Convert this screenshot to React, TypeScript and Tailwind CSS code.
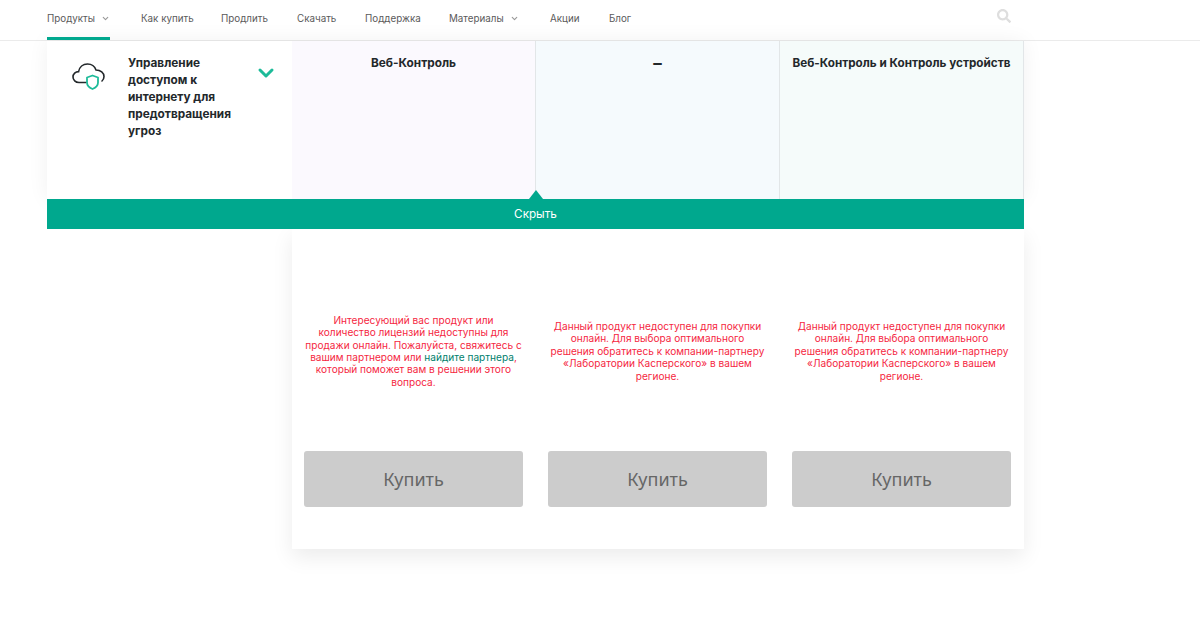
import { ChevronDown } from "lucide-react";
import { FaSearch } from "react-icons/fa";

const navItems = [
  { label: "Продукты", active: true, arrow: true, cls: "w-[94px]" },
  { label: "Как купить", cls: "w-[80px]" },
  { label: "Продлить", cls: "w-[76px]" },
  { label: "Скачать", cls: "w-[68px]" },
  { label: "Поддержка", cls: "w-[84px]" },
  { label: "Материалы", arrow: true, cls: "w-[101px]" },
  { label: "Акции", cls: "w-[59px]" },
  { label: "Блог", cls: "w-[388px]" },
];

function CloudShield() {
  return (
    <svg width="34" height="32" viewBox="0 0 34 32" fill="none">
      <path
        d="M15 24.5H8C4.5 24.5 2 22 2 19C2 16 4.5 13.6 7.6 13.6C8.4 9 12 6 16.5 6C20.6 6 23.8 8.6 25 12C29.6 12 33 15 33 18.6C33 20.4 32.2 22 31 23"
        stroke="#23282b"
        strokeWidth="1.6"
        strokeLinecap="round"
      />
      <path
        d="M21.5 17.5L27 19.5V24.5C27 27.5 24.6 29.8 21.5 31C18.4 29.8 16 27.5 16 24.5V19.5L21.5 17.5Z"
        fill="#fff"
        stroke="#1dbb99"
        strokeWidth="1.8"
        strokeLinejoin="round"
      />
    </svg>
  );
}

function BuyColumn({ children }: { children: React.ReactNode }) {
  return (
    <div className="flex-1 pl-3 pr-[13px]">
      <div className="flex h-[180px] items-center justify-center whitespace-nowrap text-center text-[10.1px] leading-[12.4px] text-[#f5273f]">
        {children}
      </div>
      <div className="mt-[10px] flex h-14 items-center justify-center rounded-[3px] bg-[#cccccc] font-['Noto_Sans',sans-serif] text-lg text-[#666666]">
        Купить
      </div>
    </div>
  );
}

const unavailable = (
  <p>
    Данный продукт недоступен для покупки
    <br />
    онлайн. Для выбора оптимального
    <br />
    решения обратитесь к компании-партнеру
    <br />
    «Лаборатории Касперского» в вашем
    <br />
    регионе.
  </p>
);

export default function App() {
  return (
    <div className="h-[637px] overflow-hidden bg-white font-['Inter',sans-serif]">
      <header className="h-[41px] border-b border-[#ebebeb] pl-[47px]">
        <nav className="flex h-10 items-start text-[9.8px] text-[#5a5a5a]">
          {navItems.map((item) => (
            <div key={item.label} className={`relative flex h-10 items-start pt-3 leading-[13px] ${item.cls}`}>
              {item.label}
              {item.arrow && <ChevronDown className="ml-[6px] mt-[2px] size-[9px] text-[#999999]" strokeWidth={3} />}
              {item.active && <div className="absolute bottom-0 left-0 h-[3px] w-[63px] bg-[#00a88e]" />}
            </div>
          ))}
          <FaSearch className="mt-[9px] size-[14px] text-[#dedede]" />
        </nav>
      </header>

      <main className="ml-[47px] w-[977px]">
        <section className="flex h-[158px] shadow-[0_0_20px_rgba(0,0,0,0.06)]">
          <div className="flex w-[245px] bg-white pt-[14px]">
            <div className="ml-[24px] mt-[3px] w-[57px]">
              <CloudShield />
            </div>
            <h3 className="w-[112px] text-[11.8px] font-bold leading-[17px] text-[#23282b]">
              Управление доступом к интернету для предотвращения угроз
            </h3>
            <ChevronDown className="ml-[14px] mt-[6px] size-6 text-[#1dbb99]" strokeWidth={3} />
          </div>
          <div className="w-[244px] border-r border-[#e2e6e8] bg-[#fbf9fe] pt-[14px] text-center text-[11.8px] font-bold leading-[17px] text-[#23282b]">
            Веб-Контроль
          </div>
          <div className="w-[244px] border-r border-[#e2e6e8] bg-[#f5fafd] pt-[14px] text-center text-[17px] font-bold leading-[17px] text-[#23282b]">
            –
          </div>
          <div className="w-[244px] border-r border-[#e2e6e8] bg-[#f5fbfa] pt-[14px] text-center text-[11.7px] font-bold leading-[17px] text-[#23282b]">
            Веб-Контроль и Контроль устройств
          </div>
        </section>

        <div className="relative z-10 flex h-[30px] items-center justify-center bg-[#00a88e] pt-[1px] text-[11.7px] text-white">
          <div className="absolute left-[482px] top-[-9px] h-0 w-0 border-x-[7px] border-b-[9px] border-x-transparent border-b-[#00a88e]" />
          Скрыть
        </div>

        <section className="ml-[245px] flex h-[320px] bg-white pt-8 shadow-[0_8px_20px_rgba(0,0,0,0.08)]">
          <BuyColumn>
            <p>
              Интересующий вас продукт или
              <br />
              количество лицензий недоступны для
              <br />
              продажи онлайн. Пожалуйста, свяжитесь с
              <br />
              вашим партнером или <span className="text-[#00806c]">найдите партнера</span>,
              <br />
              который поможет вам в решении этого
              <br />
              вопроса.
            </p>
          </BuyColumn>
          <BuyColumn>{unavailable}</BuyColumn>
          <BuyColumn>{unavailable}</BuyColumn>
        </section>
      </main>
    </div>
  );
}
